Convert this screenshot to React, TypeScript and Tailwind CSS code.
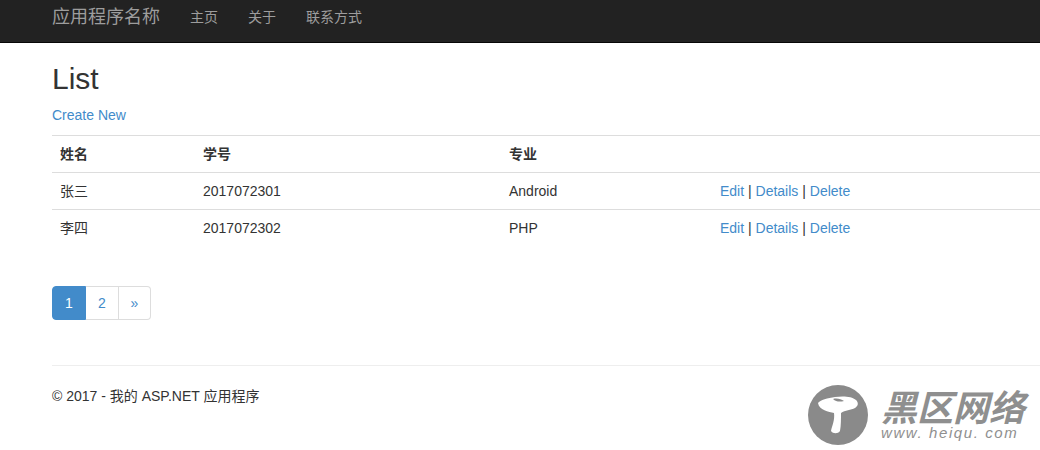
const actions = (
  <>
    <a href="#" className="text-[#428bca]">Edit</a> | <a href="#" className="text-[#428bca]">Details</a> |{" "}
    <a href="#" className="text-[#428bca]">Delete</a>
  </>
);

const students = [
  { name: "张三", id: "2017072301", major: "Android" },
  { name: "李四", id: "2017072302", major: "PHP" },
];

const Watermark = () => (
  <div className="absolute left-[808px] top-[385px] flex gap-[13px]">
    <svg width="60" height="60" viewBox="0 0 60 60">
      <circle cx="30" cy="30" r="30" fill="#8a8a8a" />
      <path
        d="M10 18C12 15 20 13 27 12C34 11 44 11 48 15C51 18 50 21 47 23C43 25 37 25 33 28C33 33 33 41 32 46C30 49 25 49 23 46C24 41 27 35 26 28C21 27 11 25 10 18Z"
        fill="#fff"
      />
      <path d="M25 14C29 13 33 14 36 16C32 17 28 17 25 14Z" fill="#8a8a8a" />
    </svg>
    <div className="text-[#8f8f8f] font-['Noto_Sans_CJK_SC',sans-serif]">
      <div className="text-[36px] leading-[40px] font-bold italic whitespace-nowrap">黑区网络</div>
      <div className="text-[15px] leading-[16px] italic tracking-[1.6px] whitespace-nowrap font-['Liberation_Sans',sans-serif]">
        www. heiqu. com
      </div>
    </div>
  </div>
);

export default function App() {
  return (
    <div className="relative h-[450px] w-[1040px] overflow-hidden bg-white text-sm leading-5 text-[#333] font-['Liberation_Sans','Noto_Sans_CJK_SC',sans-serif]">
      <nav className="h-[43px] border-b border-[#080808] bg-[#222] pt-[7px] pl-[52px] flex text-[#9d9d9d]">
        <a href="#" className="text-lg leading-5 mr-[30px]">应用程序名称</a>
        <div className="flex gap-[30px]">
          <a href="#">主页</a>
          <a href="#">关于</a>
          <a href="#">联系方式</a>
        </div>
      </nav>
      <main className="pl-[52px]">
        <h2 className="mt-[19px] mb-[10px] text-[30px] leading-[33px] font-normal">List</h2>
        <p className="mb-[10px]">
          <a href="#" className="text-[#428bca]">Create New</a>
        </p>
        <table className="w-full mb-[40px] border-collapse table-fixed">
          <thead>
            <tr className="border-t border-b border-[#ddd] text-left">
              <th className="w-[143px] p-2 font-bold">姓名</th>
              <th className="w-[306px] p-2 font-bold">学号</th>
              <th className="w-[211px] p-2 font-bold">专业</th>
              <th className="p-2" />
            </tr>
          </thead>
          <tbody>
            {students.map((s, i) => (
              <tr key={s.id} className={i > 0 ? "border-t border-[#ddd]" : ""}>
                <td className="p-2">{s.name}</td>
                <td className="p-2">{s.id}</td>
                <td className="p-2">{s.major}</td>
                <td className="p-2 whitespace-nowrap">{actions}</td>
              </tr>
            ))}
          </tbody>
        </table>
        <div className="flex h-[34px] w-fit text-[#428bca] mb-[45px]">
          <a href="#" className="w-[34px] flex items-center justify-center rounded-l bg-[#428bca] text-white border border-[#428bca]">1</a>
          <a href="#" className="w-[33px] flex items-center justify-center border-y border-r border-[#ddd]">2</a>
          <a href="#" className="w-[32px] flex items-center justify-center rounded-r border-y border-r border-[#ddd]">»</a>
        </div>
        <hr className="border-t border-[#eee]" />
        <footer className="mt-[20px]">© 2017 - 我的 ASP.NET 应用程序</footer>
      </main>
      <Watermark />
    </div>
  );
}
